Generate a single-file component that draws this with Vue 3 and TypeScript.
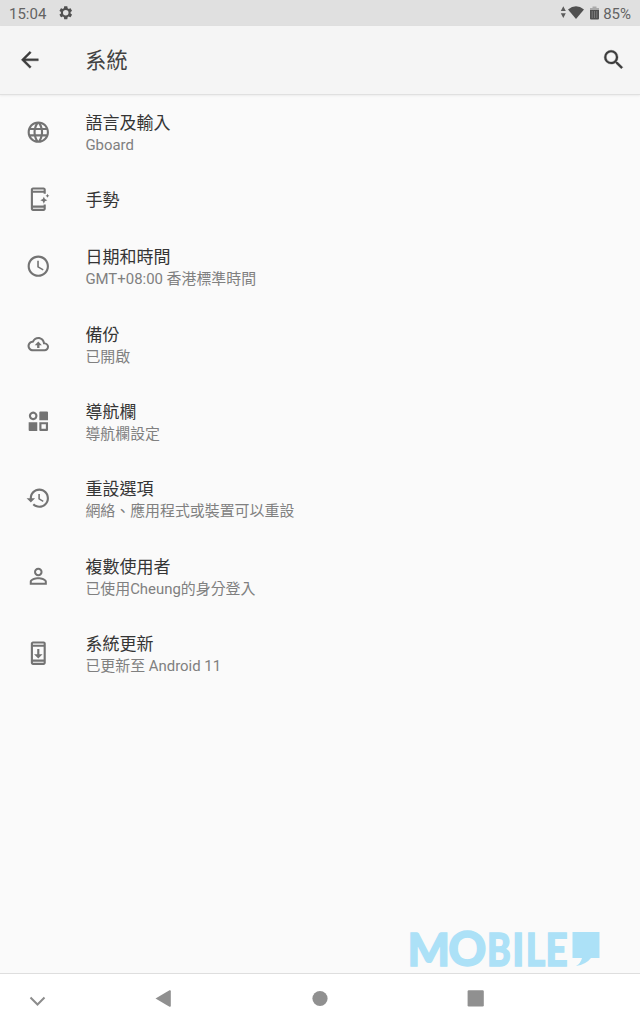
<script setup lang="ts">
interface Item {
  title: string
  sub?: string
  icon: string
  scale?: number
}

const items: Item[] = [
  {
    title: '語言及輸入',
    sub: 'Gboard',
    icon: 'M11.99 2C6.47 2 2 6.48 2 12s4.47 10 9.99 10C17.52 22 22 17.52 22 12S17.52 2 11.99 2zm6.93 6h-2.95c-.32-1.25-.78-2.45-1.38-3.56 1.84.63 3.37 1.91 4.33 3.56zM12 4.04c.83 1.2 1.48 2.53 1.91 3.96h-3.82c.43-1.43 1.08-2.76 1.91-3.96zM4.26 14C4.1 13.36 4 12.69 4 12s.1-1.36.26-2h3.38c-.08.66-.14 1.32-.14 2s.06 1.34.14 2H4.26zm.82 2h2.95c.32 1.25.78 2.45 1.38 3.56-1.84-.63-3.37-1.9-4.33-3.56zm2.95-8H5.08c.96-1.66 2.49-2.93 4.33-3.56C8.81 5.55 8.35 6.75 8.03 8zM12 19.96c-.83-1.2-1.48-2.53-1.91-3.96h3.82c-.43 1.43-1.08 2.76-1.91 3.96zM14.34 14H9.66c-.09-.66-.16-1.32-.16-2s.07-1.35.16-2h4.68c.09.65.16 1.32.16 2s-.07 1.34-.16 2zm.25 5.56c.6-1.11 1.06-2.31 1.38-3.56h2.95c-.96 1.65-2.49 2.93-4.33 3.56zM16.36 14c.08-.66.14-1.32.14-2s-.06-1.34-.14-2h3.38c.16.64.26 1.31.26 2s-.1 1.36-.26 2h-3.38z',
  },
  {
    title: '手勢',
    icon: 'M7 1h10c1.1 0 2 .9 2 2v4h-2V6H7v12h10v-1h2v4c0 1.1-.9 2-2 2H7c-1.1 0-2-.9-2-2V3c0-1.1.9-2 2-2zM7 3v1h10V3zM7 20v1h10v-1zM17.2 9.6l1 2.300 2.300 1-2.300 1-1 2.300-1-2.300-2.300-1 2.300-1zM20.600 7l.6 1.200 1.200.6-1.200.6-.6 1.200-.6-1.200-1.200-.6 1.200-.6z',
  },
  {
    title: '日期和時間',
    sub: 'GMT+08:00 香港標準時間',
    icon: 'M11.99 2C6.47 2 2 6.48 2 12s4.47 10 9.99 10C17.52 22 22 17.52 22 12S17.52 2 11.99 2zM12 20c-4.42 0-8-3.58-8-8s3.58-8 8-8 8 3.58 8 8-3.58 8-8 8zm.5-13H11v6l5.25 3.15.75-1.23-4.5-2.67z',
  },
  {
    title: '備份',
    sub: '已開啟',
    scale: 0.84,
    icon: 'M19.35 10.04C18.67 6.59 15.64 4 12 4 9.11 4 6.6 5.64 5.35 8.04 2.34 8.36 0 10.91 0 14c0 3.31 2.69 6 6 6h13c2.76 0 5-2.24 5-5 0-2.64-2.05-4.78-4.65-4.96zM19 17.7H6c-2.1 0-3.7-1.7-3.7-3.7 0-2 1.5-3.5 3.4-3.7l1.1-.11.5-.95C8.2 7.44 9.94 6.3 12 6.3c2.5 0 4.6 1.76 5.1 4.2l.3 1.6 1.7.11c1.4.1 2.6 1.31 2.6 2.76 0 1.55-1.2 2.73-2.7 2.73zM8 13.2h2.7v3h2.6v-3H16l-4-4.2z',
  },
  {
    title: '導航欄',
    sub: '導航欄設定',
    scale: 0.96,
    icon: 'M7 2.6a4.2 4.2 0 1 0 .001 0zM7 4.7a2.1 2.1 0 1 1-.001 0zM14 2.6h6.5a1 1 0 0 1 1 1v7.4H13V3.6a1 1 0 0 1 1-1zM2.6 13H11v8.5H3.6a1 1 0 0 1-1-1zM13 13h8.5v7.5a1 1 0 0 1-1 1H14a1 1 0 0 1-1-1zM15.1 15.1v4.3h4.3V15.1z',
  },
  {
    title: '重設選項',
    sub: '網絡、應用程式或裝置可以重設',
    icon: 'M13 3c-4.97 0-9 4.03-9 9H1l3.89 3.89.07.14L9 12H6c0-3.87 3.13-7 7-7s7 3.13 7 7-3.13 7-7 7c-1.93 0-3.68-.79-4.94-2.06l-1.42 1.42C8.27 19.99 10.51 21 13 21c4.97 0 9-4.03 9-9s-4.03-9-9-9zm-1 5v5l4.28 2.54.72-1.21-3.5-2.08V8H12z',
  },
  {
    title: '複數使用者',
    sub: '已使用Cheung的身分登入',
    icon: 'M12 5.9c1.16 0 2.1.94 2.1 2.1s-.94 2.1-2.1 2.1S9.9 9.16 9.9 8s.94-2.1 2.1-2.1m0 9c2.97 0 6.1 1.46 6.1 2.1v1.1H5.9V17c0-.64 3.13-2.1 6.1-2.1M12 4C9.79 4 8 5.79 8 8s1.79 4 4 4 4-1.79 4-4-1.79-4-4-4zm0 9c-2.67 0-8 1.34-8 4v3h16v-3c0-2.66-5.33-4-8-4z',
  },
  {
    title: '系統更新',
    sub: '已更新至 Android 11',
    icon: 'M17 1.01L7 1c-1.1 0-2 .9-2 2v18c0 1.1.9 2 2 2h10c1.1 0 2-.9 2-2V3c0-1.1-.9-1.99-2-1.99zM17 21H7v-1h10v1zm0-3H7V6h10v12zm0-14H7V3h10v1zm-1 9h-3V8h-2v5H8l4 4 4-4z',
  },
]

function iconTransform(scale = 1): string {
  return `translate(12 12) scale(${scale}) translate(-12 -12)`
}
</script>

<template>
  <div class="screen">
    <div class="status">
      <span class="time">15:04</span>
      <svg class="gear" viewBox="0 0 24 24"><path fill-rule="evenodd" d="M19.43 12.98c.04-.32.07-.64.07-.98s-.03-.66-.07-.98l2.11-1.65c.19-.15.24-.42.12-.64l-2-3.46c-.12-.22-.39-.3-.61-.22l-2.49 1c-.52-.4-1.08-.73-1.69-.98l-.38-2.65C14.46 2.18 14.25 2 14 2h-4c-.25 0-.46.18-.49.42l-.38 2.65c-.61.25-1.17.59-1.69.98l-2.49-1c-.23-.09-.49 0-.61.22l-2 3.46c-.13.22-.07.49.12.64l2.11 1.65c-.04.32-.07.65-.07.98s.03.66.07.98l-2.11 1.65c-.19.15-.24.42-.12.64l2 3.46c.12.22.39.3.61.22l2.49-1c.52.4 1.08.73 1.69.98l.38 2.65c.03.24.24.42.49.42h4c.25 0 .46-.18.49-.42l.38-2.65c.61-.25 1.17-.59 1.69-.98l2.49 1c.23.09.49 0 .61-.22l2-3.46c.12-.22.07-.49-.12-.64zM12 16.3a4.3 4.3 0 1 1 0-8.6 4.3 4.3 0 0 1 0 8.6z" /></svg>
      <svg class="signals" viewBox="0 0 40 16">
        <path class="arrows" d="M3.3 1.2l2.5 4.800H.8zM3.300 13l2.500-4.800H.8z" />
        <path d="M8 4.5Q16-2 24 4.5L16 14z" />
        <path class="light" d="M32.5 1.5h4v1.5H39v3h-9V3h2.5z" />
        <path d="M30 5h9v8.5q0 1-1 1h-7q-1 0-1-1z" />
        <path class="bars" d="M32.2 6v7M34.5 6v7M36.8 6v7" />
      </svg>
      <span class="percent">85%</span>
    </div>
    <header class="bar">
      <svg class="back" viewBox="0 0 24 24"><path d="M20 11H7.83l5.59-5.59L12 4l-8 8 8 8 1.41-1.41L7.83 13H20v-2z" /></svg>
      <h1>系統</h1>
      <svg class="search" viewBox="0 0 24 24"><path d="M15.5 14h-.79l-.28-.27A6.471 6.471 0 0 0 16 9.5 6.5 6.5 0 1 0 9.5 16c1.61 0 3.09-.59 4.23-1.57l.27.28v.79l5 4.99L20.49 19l-4.99-5zm-6 0C7.01 14 5 11.99 5 9.5S7.01 5 9.5 5 14 7.01 14 9.5 11.99 14 9.5 14z" /></svg>
    </header>
    <main class="list">
      <div v-for="item in items" :key="item.title" class="row" :class="{ single: !item.sub }">
        <svg class="icon" viewBox="-1.4 -1.3 26.25 26.25"><path fill-rule="evenodd" :d="item.icon" :transform="iconTransform(item.scale)" /></svg>
        <div class="texts">
          <div class="title">{{ item.title }}</div>
          <div v-if="item.sub" class="sub">{{ item.sub }}</div>
        </div>
      </div>
    </main>
    <svg class="watermark" viewBox="0 0 220 70">
      <g class="letters">
        <text transform="translate(7.500 50.900) scale(.97 1)">M</text>
        <text transform="translate(48.200 51.300) scale(1.020 1.020)">O</text>
        <text transform="translate(87 50.900) scale(.78 1)">B</text>
        <text transform="translate(112.300 50.900) scale(.86 1)">I</text>
        <text transform="translate(125.800 50.900) scale(.81 1)">L</text>
        <text transform="translate(145.400 50.900) scale(.84 1)">E</text>
      </g>
      <path d="M172.5 17h27v26h-8.5q-5 6.5-15 8 5-3 6-8h-9.5z" />
    </svg>
    <nav class="nav">
      <svg viewBox="0 0 640 50">
        <path class="chevron" d="M30.500 23.500l7 7 7-7" />
        <path d="M155.5 24.5L169.5 16.3q1.300-.5 1.300 1V31.700q0 1.500-1.300 1z" />
        <circle cx="320" cy="24.5" r="7.6" />
        <rect x="467.6" y="16.3" width="16.2" height="16.2" rx="1.2" />
      </svg>
    </nav>
  </div>
</template>

<style>
body {
  margin: 0;
  background: #fafafa;
}
</style>

<style scoped>
.screen {
  position: relative;
  display: flex;
  flex-direction: column;
  width: 640px;
  height: 1024px;
  overflow: hidden;
  background: #fafafa;
  font-family: Roboto, 'Noto Sans CJK TC', sans-serif;
}
svg {
  display: block;
  flex: none;
}
.status {
  display: flex;
  align-items: center;
  box-sizing: border-box;
  height: 26px;
  padding: 0 9px;
  background: #e0e0e0;
  color: #636363;
  font-size: 15px;
  line-height: 26px;
  fill: #505050;
}
.time,
.percent {
  padding-top: 2px;
}
.gear {
  width: 15.5px;
  height: 15.5px;
  margin-left: 11.5px;
}
.signals {
  width: 40px;
  height: 16px;
  margin: 0 3px 0 auto;
}
.arrows {
  fill: #5c5c5c;
}
.light {
  fill: #aaa;
}
.bars {
  stroke: #858585;
  stroke-width: 0.8;
}
.bar {
  display: flex;
  align-items: center;
  box-sizing: border-box;
  height: 69px;
  padding: 0 13px 0 16.7px;
  background: #f5f5f5;
  border-bottom: 1px solid #e0e0e0;
  box-shadow: 0 1px 2px rgba(0, 0, 0, 0.06);
  fill: #3c3c3c;
  stroke: #3c3c3c;
  stroke-width: 0.3;
}
.back,
.search {
  width: 25.6px;
  height: 25.6px;
}
.search {
  margin-left: auto;
}
h1 {
  margin: 0 0 0 43px;
  padding-top: 2px;
  color: #424242;
  font-size: 21.1px;
  font-weight: 400;
  line-height: 30px;
}
.list {
  display: flex;
  flex: 1;
  flex-direction: column;
  margin-top: -1.6px;
}
.row {
  display: flex;
  align-items: center;
  height: 77.33px;
}
.single {
  height: 57.06px;
}
.icon {
  width: 28px;
  height: 28px;
  margin: 0 33.4px 0 24px;
  fill: #737373;
}
.texts {
  padding-top: 2.8px;
}
.title {
  color: #353535;
  font-size: 17px;
  line-height: 23px;
}
.sub {
  color: #808080;
  font-size: 14.93px;
  line-height: 20px;
}
.watermark {
  position: absolute;
  top: 915px;
  left: 400px;
  width: 220px;
  height: 70px;
  fill: #ace1f7;
}
.letters {
  font-family: Lato, sans-serif;
  font-size: 46px;
  font-weight: 900;
  stroke: #ace1f7;
  stroke-width: 1.4;
}
.nav {
  height: 50px;
  background: #fff;
  border-top: 1px solid #dedede;
  fill: #909090;
}
.nav svg {
  width: 640px;
  height: 50px;
}
.chevron {
  fill: none;
  stroke: #8c8c8c;
  stroke-width: 2;
}
</style>
